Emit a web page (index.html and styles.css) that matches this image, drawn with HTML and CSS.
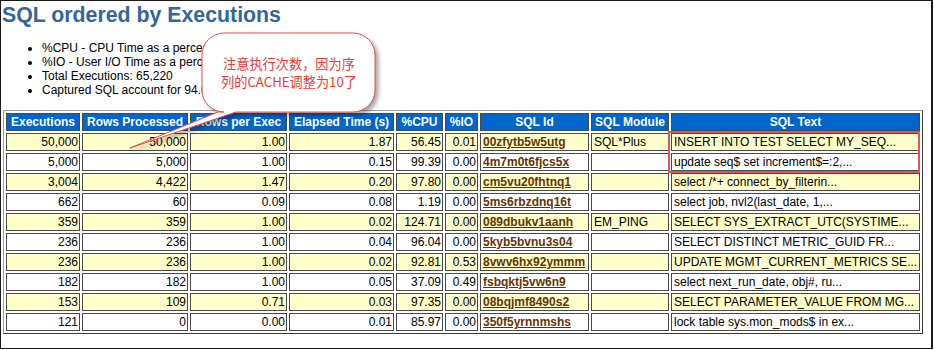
FILE: index.html
```html
<!DOCTYPE html>
<html lang="zh">
<head>
<meta charset="utf-8">
<title>SQL ordered by Executions</title>
<link rel="stylesheet" href="styles.css">
</head>
<body>
<div class="frame">
  <h1 class="title">SQL ordered by Executions</h1>
  <ul class="notes">
    <li>%CPU - CPU Time as a percentage of Elapsed Time</li>
    <li>%IO - User I/O Time as a percentage of Elapsed Time</li>
    <li>Total Executions: 65,220</li>
    <li>Captured SQL account for 94.0% of Total</li>
  </ul>
  <table class="awr">
    <thead>
      <tr>
        <th class="c1">Executions</th>
        <th class="c2">Rows Processed</th>
        <th class="c3">Rows per Exec</th>
        <th class="c4">Elapsed Time (s)</th>
        <th class="c5">%CPU</th>
        <th class="c6">%IO</th>
        <th class="c7">SQL Id</th>
        <th class="c8">SQL Module</th>
        <th class="c9">SQL Text</th>
      </tr>
    </thead>
    <tbody>
      <tr class="odd"><td class="n">50,000</td><td class="n">50,000</td><td class="n">1.00</td><td class="n">1.87</td><td class="n">56.45</td><td class="n">0.01</td><td><a href="#">00zfytb5w5utg</a></td><td>SQL*Plus</td><td>INSERT INTO TEST SELECT MY_SEQ...</td></tr>
      <tr><td class="n">5,000</td><td class="n">5,000</td><td class="n">1.00</td><td class="n">0.15</td><td class="n">99.39</td><td class="n">0.00</td><td><a href="#">4m7m0t6fjcs5x</a></td><td></td><td>update seq$ set increment$=:2,...</td></tr>
      <tr class="odd"><td class="n">3,004</td><td class="n">4,422</td><td class="n">1.47</td><td class="n">0.20</td><td class="n">97.80</td><td class="n">0.00</td><td><a href="#">cm5vu20fhtnq1</a></td><td></td><td>select /*+ connect_by_filterin...</td></tr>
      <tr><td class="n">662</td><td class="n">60</td><td class="n">0.09</td><td class="n">0.08</td><td class="n">1.19</td><td class="n">0.00</td><td><a href="#">5ms6rbzdnq16t</a></td><td></td><td>select job, nvl2(last_date, 1,...</td></tr>
      <tr class="odd"><td class="n">359</td><td class="n">359</td><td class="n">1.00</td><td class="n">0.02</td><td class="n">124.71</td><td class="n">0.00</td><td><a href="#">089dbukv1aanh</a></td><td>EM_PING</td><td>SELECT SYS_EXTRACT_UTC(SYSTIME...</td></tr>
      <tr><td class="n">236</td><td class="n">236</td><td class="n">1.00</td><td class="n">0.04</td><td class="n">96.04</td><td class="n">0.00</td><td><a href="#">5kyb5bvnu3s04</a></td><td></td><td>SELECT DISTINCT METRIC_GUID FR...</td></tr>
      <tr class="odd"><td class="n">236</td><td class="n">236</td><td class="n">1.00</td><td class="n">0.02</td><td class="n">92.81</td><td class="n">0.53</td><td><a href="#">8vwv6hx92ymmm</a></td><td></td><td>UPDATE MGMT_CURRENT_METRICS SE...</td></tr>
      <tr><td class="n">182</td><td class="n">182</td><td class="n">1.00</td><td class="n">0.05</td><td class="n">37.09</td><td class="n">0.49</td><td><a href="#">fsbqktj5vw6n9</a></td><td></td><td>select next_run_date, obj#, ru...</td></tr>
      <tr class="odd"><td class="n">153</td><td class="n">109</td><td class="n">0.71</td><td class="n">0.03</td><td class="n">97.35</td><td class="n">0.00</td><td><a href="#">08bqjmf8490s2</a></td><td></td><td>SELECT PARAMETER_VALUE FROM MG...</td></tr>
      <tr><td class="n">121</td><td class="n">0</td><td class="n">0.00</td><td class="n">0.01</td><td class="n">85.97</td><td class="n">0.00</td><td><a href="#">350f5yrnnmshs</a></td><td></td><td>lock table sys.mon_mods$ in ex...</td></tr>
    </tbody>
  </table>

  <div class="highlight"></div>

  <svg class="bubble" width="265" height="130" viewBox="0 0 265 130" aria-hidden="true">
    <path d="M104,5 H233 A22,22 0 0 1 255,27 V62 A22,22 0 0 1 233,84 H116 L10,120 L98,84 H104 A22,22 0 0 1 82,62 V27 A22,22 0 0 1 104,5 Z" fill="#ffffff" stroke="#e05050" stroke-width="1"/>
  </svg>
  <div class="bubble-text">注意执行次数，因为序<br>列的CACHE调整为10了</div>
</div>
</body>
</html>
```

FILE: styles.css
```css
html, body {
  margin: 0;
  padding: 0;
  background: #ffffff;
}

body {
  font-family: "Liberation Sans", Arial, sans-serif;
  font-size: 12px;
  color: #000000;
}

.frame {
  position: relative;
  width: 930px;
  height: 347px;
  border: 1px solid #1a1a1a;
  border-right-width: 2px;
}

.title {
  margin: 2px 0 0 1px;
  font-family: "Liberation Sans", Arial, sans-serif;
  font-size: 21.3px;
  line-height: 24px;
  font-weight: bold;
  color: #336699;
}

.notes {
  margin: 14px 0 0 0;
  padding: 0 0 0 41px;
  font-size: 12px;
  line-height: 14px;
  color: #000000;
}

.awr {
  margin: 13px 0 0 2px;
  width: 920px;
  table-layout: fixed;
  border-collapse: separate;
  border-spacing: 2px;
  border: 1px solid;
  border-color: #a0a0a0 #3a3a3a #3a3a3a #a0a0a0;
  font-size: 12px;
}

.awr th,
.awr td {
  height: 16px;
  line-height: 16px;
  padding: 0 2px;
  border: 1px solid #4a4a4a;
  white-space: nowrap;
  overflow: hidden;
}

.awr th {
  background: #0066cc;
  color: #ffffff;
  font-weight: bold;
  text-align: center;
}

.awr td {
  background: #ffffff;
  text-align: left;
}

.awr tr.odd td {
  background: #ffffcc;
}

.awr td.n {
  text-align: right;
  padding-right: 1px;
  padding-left: 3px;
}

.awr a {
  color: #663300;
  font-weight: bold;
  text-decoration: underline;
}

.c1 { width: 68px; }
.c2 { width: 100px; }
.c3 { width: 91px; }
.c4 { width: 99px; }
.c5 { width: 41px; }
.c6 { width: 27px; }
.c7 { width: 103px; }
.c8 { width: 72px; }
.c9 { width: 243px; }

.highlight {
  position: absolute;
  left: 667px;
  top: 130px;
  width: 248px;
  height: 38px;
  border: 2px solid #e05555;
}

.bubble {
  position: absolute;
  left: 119px;
  top: 27px;
  filter: drop-shadow(3px 3px 2px rgba(0, 0, 0, 0.35));
}

.bubble-text {
  position: absolute;
  left: 201px;
  top: 32px;
  width: 174px;
  height: 80px;
  display: flex;
  align-items: center;
  justify-content: center;
  text-align: center;
  font-family: "Noto Sans CJK SC", "Liberation Sans", sans-serif;
  font-size: 13.2px;
  line-height: 18px;
  color: #e83c3c;
}
```
